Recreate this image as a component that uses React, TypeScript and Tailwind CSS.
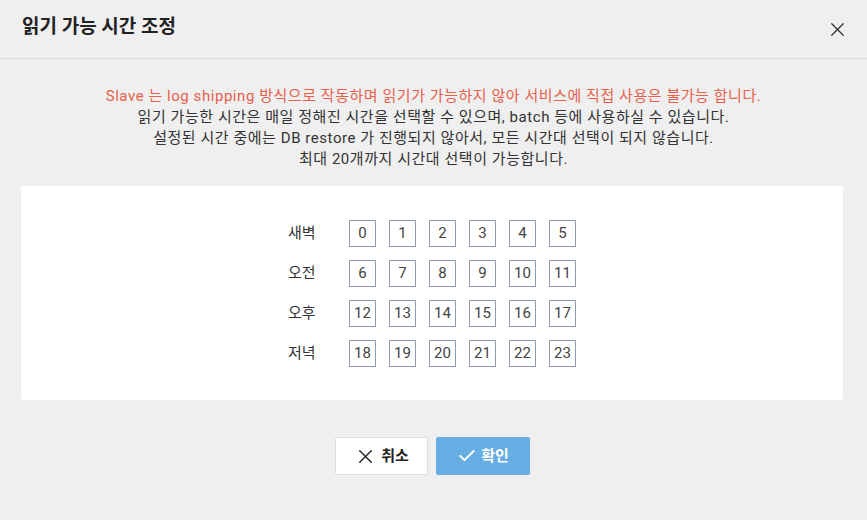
import { X, Check } from "lucide-react";

const rows = [
  { label: "새벽", hours: [0, 1, 2, 3, 4, 5] },
  { label: "오전", hours: [6, 7, 8, 9, 10, 11] },
  { label: "오후", hours: [12, 13, 14, 15, 16, 17] },
  { label: "저녁", hours: [18, 19, 20, 21, 22, 23] },
];

export default function App() {
  return (
    <div
      className="w-[867px] h-[520px] bg-[#efefef] text-[#333] overflow-hidden"
      style={{ fontFamily: "Roboto, 'Noto Sans CJK KR', sans-serif" }}
    >
      <div className="flex items-center justify-between h-[59px] pl-[22px] pr-[18px] border-b border-[#dcdcdc]">
        <h2 className="text-[19px] font-bold text-[#222] -mt-[4px]">읽기 가능 시간 조정</h2>
        <button className="text-[#333] mt-[1px]">
          <X size={23} strokeWidth={1.4} />
        </button>
      </div>

      <div className="pt-[27px] text-center text-[15px] leading-[21px] tracking-[0.55px] text-[#333]">
        <p className="text-[#e8604c]">Slave 는 log shipping 방식으로 작동하며 읽기가 가능하지 않아 서비스에 직접 사용은 불가능 합니다.</p>
        <p>읽기 가능한 시간은 매일 정해진 시간을 선택할 수 있으며, batch 등에 사용하실 수 있습니다.</p>
        <p>설정된 시간 중에는 DB restore 가 진행되지 않아서, 모든 시간대 선택이 되지 않습니다.</p>
        <p>최대 20개까지 시간대 선택이 가능합니다.</p>
      </div>

      <div className="ml-[21px] w-[822px] mt-[16px] h-[214px] bg-white rounded-[3px] flex justify-center pt-[34px]">
        <div className="flex flex-col gap-[13px]">
          {rows.map((r) => (
            <div key={r.label} className="flex items-center">
              <span className="w-[61px] text-[15px] text-[#333]">{r.label}</span>
              <div className="flex gap-[13px]">
                {r.hours.map((h) => (
                  <button
                    key={h}
                    className="w-[27px] h-[27px] border border-[#8d9ab0] bg-white text-[15px] text-[#444] flex items-center justify-center"
                  >
                    {h}
                  </button>
                ))}
              </div>
            </div>
          ))}
        </div>
      </div>

      <div className="flex justify-center gap-[8px] mt-[37px] ml-[-2px]">
        <button className="w-[93px] h-[38px] bg-white border border-[#dedede] rounded-[2px] flex items-center justify-center gap-[4px] text-[15px] font-bold text-[#222]">
          <X size={23} strokeWidth={1.5} />
          취소
        </button>
        <button className="w-[94px] h-[38px] bg-[#66ade4] rounded-[2px] flex items-center justify-center gap-[4px] text-[15px] font-bold text-white">
          <Check size={20} strokeWidth={2.4} />
          확인
        </button>
      </div>
    </div>
  );
}
